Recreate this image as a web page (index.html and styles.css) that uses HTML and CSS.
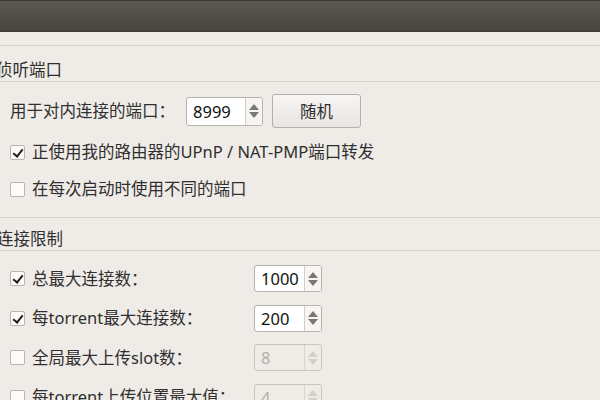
FILE: index.html
```html
<!DOCTYPE html>
<html lang="zh-CN">
<head>
    <meta charset="UTF-8">
    <title>首选项 - 网络</title>
    <link rel="stylesheet" href="styles.css">
</head>
<body>
<div class="titlebar"></div>
<div class="topstrip"></div>

<!-- 侦听端口 -->
<div class="section-title">侦听端口</div>
<div class="section">
    <div class="port-row">
        <span class="label">用于对内连接的端口：</span>
        <div class="spin spin-port">
            <span class="spin-value">8999</span>
            <span class="stepper"><i class="up"></i><i class="down"></i></span>
        </div>
        <button class="btn">随机</button>
    </div>
    <div class="check-row">
        <span class="check checked"></span>
        <span class="label">正使用我的路由器的UPnP / NAT-PMP端口转发</span>
    </div>
    <div class="check-row">
        <span class="check"></span>
        <span class="label">在每次启动时使用不同的端口</span>
    </div>
</div>

<!-- 连接限制 -->
<div class="section-title second">连接限制</div>
<div class="limits">
    <div class="limit-row">
        <div class="check-row">
            <span class="check checked"></span>
            <span class="label">总最大连接数：</span>
        </div>
        <div class="spin">
            <span class="spin-value">1000</span>
            <span class="stepper"><i class="up"></i><i class="down"></i></span>
        </div>
    </div>
    <div class="limit-row">
        <div class="check-row">
            <span class="check checked"></span>
            <span class="label">每torrent最大连接数：</span>
        </div>
        <div class="spin">
            <span class="spin-value">200</span>
            <span class="stepper"><i class="up"></i><i class="down"></i></span>
        </div>
    </div>
    <div class="limit-row">
        <div class="check-row">
            <span class="check"></span>
            <span class="label">全局最大上传slot数：</span>
        </div>
        <div class="spin disabled">
            <span class="spin-value">8</span>
            <span class="stepper"><i class="up"></i><i class="down"></i></span>
        </div>
    </div>
    <div class="limit-row">
        <div class="check-row">
            <span class="check"></span>
            <span class="label">每torrent上传位置最大值：</span>
        </div>
        <div class="spin disabled">
            <span class="spin-value">4</span>
            <span class="stepper"><i class="up"></i><i class="down"></i></span>
        </div>
    </div>
</div>
</body>
</html>
```

FILE: styles.css
```css
* {
    margin: 0;
    padding: 0;
    box-sizing: border-box;
}
html, body {
    width: 600px;
    height: 400px;
    overflow: hidden;
}
body {
    background: #efebe7;
    color: #2f2f2f;
    font-family: "Noto Sans", "Noto Sans CJK SC", sans-serif;
    font-size: 16.5px;
}
.label .colon,
.label {
    font-family: "Noto Sans", "Noto Sans CJK SC", sans-serif;
}

/* 顶部深色标题栏 */
.titlebar {
    height: 32px;
    border-top: 1px solid #3a3935;
    background: linear-gradient(#5a5850, #46453f);
    border-bottom: 1px solid #3f3e39;
}
.topstrip {
    height: 14px;
    border-bottom: 1px solid #d7d2cd;
}

.section-title {
    height: 36px;
    padding-top: 13px;
    line-height: 22px;
    margin-left: -4px;
    border-bottom: 1px solid #d7d2cd;
}
.section-title.second {
    height: 33px;
    padding-top: 10px;
    margin-left: -3px;
}

.section {
    padding: 12px 0 15px 10px;
    border-bottom: 1px solid #d7d2cd;
}
.label {
    line-height: 26px;
    white-space: nowrap;
}

.port-row {
    display: flex;
    align-items: center;
    height: 34px;
}
.port-row .label {
    width: 176px;
}

.check-row {
    display: flex;
    align-items: center;
    height: 26px;
    margin-top: 11px;
}
.check {
    width: 15px;
    height: 15px;
    margin-right: 7px;
    background: #fbfbfa;
    border: 1px solid #b9b5b0;
    border-radius: 2px;
    position: relative;
    flex: none;
}
.check.checked::after {
    content: "";
    position: absolute;
    left: 4px;
    top: 1px;
    width: 4px;
    height: 8px;
    border: solid #1e1e1e;
    border-width: 0 2.5px 2.5px 0;
    transform: rotate(38deg);
}

/* 数值输入框 */
.spin {
    display: flex;
    width: 77px;
    height: 29px;
    background: #fff;
    border: 1px solid #b8b3ad;
    border-radius: 3px;
    flex: none;
}
.spin-value {
    flex: 1;
    padding-left: 6px;
    line-height: 27px;
    color: #111;
}
.stepper {
    width: 17px;
    border-left: 1px solid #d2cec9;
    background: #f6f5f3;
    border-radius: 0 2px 2px 0;
    display: flex;
    flex-direction: column;
    align-items: center;
    justify-content: center;
    gap: 2px;
}
.stepper i {
    width: 0;
    height: 0;
    border-left: 5px solid transparent;
    border-right: 5px solid transparent;
}
.stepper .up {
    border-bottom: 6px solid #7a7774;
}
.stepper .down {
    border-top: 6px solid #7a7774;
}
.spin.disabled {
    background: #efebe7;
    border-color: #c8c3be;
}
.spin.disabled .spin-value {
    color: #b3afaa;
}
.spin.disabled .stepper {
    background: #efebe7;
    border-left-color: #d8d4cf;
}
.spin.disabled .up {
    border-bottom-color: #d3cfca;
}
.spin.disabled .down {
    border-top-color: #d3cfca;
}

.btn {
    width: 89px;
    height: 34px;
    margin-left: 9px;
    font: inherit;
    color: #2f2f2f;
    background: linear-gradient(#f7f6f5, #e8e5e2);
    border: 1px solid #b5b0aa;
    border-radius: 3px;
}

/* 连接限制 */
.limits {
    padding: 14px 0 0 10px;
    display: flex;
    flex-direction: column;
    gap: 12.5px;
}
.limit-row {
    display: grid;
    grid-template-columns: 244px 68px;
    align-items: center;
    height: 27px;
}
.limit-row .check-row {
    margin-top: 0;
}
.limit-row .spin {
    width: 68px;
    height: 27px;
}
.limit-row .spin-value {
    line-height: 25px;
}
```
